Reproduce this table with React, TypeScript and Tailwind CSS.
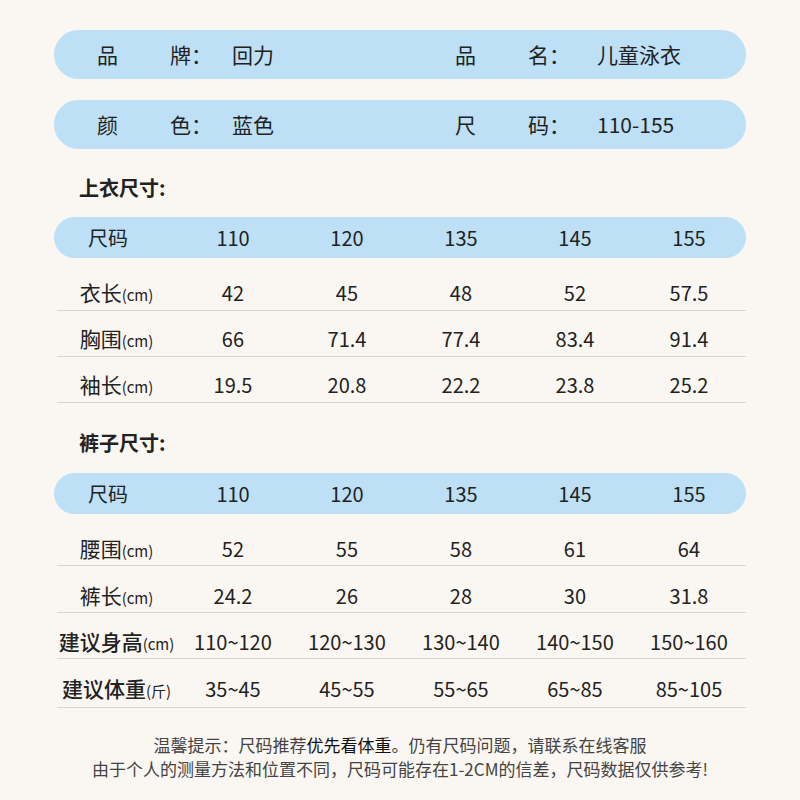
import React from "react";

const font = { fontFamily: '"Noto Sans CJK SC", "Noto Sans", sans-serif' };

const cols = ["110", "120", "135", "145", "155"];

function InfoPill({ a, b }: { a: [string, string, string]; b: [string, string, string] }) {
  const half = (x: [string, string, string], w: string, ml: string) => (
    <div className={`flex shrink-0 items-center ${w}`}>
      <div className="flex w-[115px] justify-between">
        <span>{x[0]}</span>
        <span>{x[1]}：</span>
      </div>
      <span className={ml}>{x[2]}</span>
    </div>
  );
  return (
    <div className="flex h-[49px] items-center rounded-full bg-[#bde0f6] pl-[43px] text-[21px] text-[#222]">
      {half(a, "w-[358px]", "ml-[20px]")}
      {half(b, "", "ml-[27px]")}
    </div>
  );
}

function Header() {
  return (
    <div className="flex h-[41px] items-center rounded-full bg-[#bde0f6] text-[20px] text-[#222]">
      <div className="w-[123px] pr-[14px] text-center">尺码</div>
      {cols.map((c) => (
        <div key={c} className="w-[115px] text-center">
          {c}
        </div>
      ))}
    </div>
  );
}

function Row({
  label,
  unit,
  vals,
  h,
  pt,
  bold,
}: {
  label: string;
  unit: string;
  vals: string[];
  h: string;
  pt: string;
  bold?: boolean;
}) {
  return (
    <div className={`ml-[3px] flex items-center border-b border-[#d9d4ce] text-[20px] text-[#222] ${h} ${pt}`}>
      <div className="flex w-[120px] items-baseline justify-center whitespace-nowrap">
        <span className={bold ? "font-medium text-[21px]" : "text-[21px]"}>{label}</span>
        <span className="text-[15px]">{unit}</span>
      </div>
      {vals.map((v, i) => (
        <div key={i} className="w-[115px] text-center">
          {v}
        </div>
      ))}
    </div>
  );
}

export default function App() {
  return (
    <div className="min-h-[800px] w-[800px] bg-[#faf6f1]" style={font}>
      <div className="mx-auto w-[692px] pt-[30px]">
        <InfoPill a={["品", "牌", "回力"]} b={["品", "名", "儿童泳衣"]} />
        <div className="h-[21px]" />
        <InfoPill a={["颜", "色", "蓝色"]} b={["尺", "码", "110-155"]} />

        <div className="mt-[25px] pl-[25px] text-[20px] font-bold leading-[28px] text-[#222]">上衣尺寸:</div>
        <div className="mt-[15px]">
          <Header />
        </div>
        <div className="mt-[7px]">
          <Row label="衣长" unit="(cm)" vals={["42", "45", "48", "52", "57.5"]} h="h-[46px]" pt="pt-[10px]" />
          <Row label="胸围" unit="(cm)" vals={["66", "71.4", "77.4", "83.4", "91.4"]} h="h-[46px]" pt="pt-[10px]" />
          <Row label="袖长" unit="(cm)" vals={["19.5", "20.8", "22.2", "23.8", "25.2"]} h="h-[46px]" pt="pt-[10px]" />
        </div>

        <div className="mt-[26px] pl-[25px] text-[20px] font-bold leading-[28px] text-[#222]">裤子尺寸:</div>
        <div className="mt-[16px]">
          <Header />
        </div>
        <div className="mt-[7px]">
          <Row label="腰围" unit="(cm)" vals={["52", "55", "58", "61", "64"]} h="h-[45px]" pt="pt-[11px]" />
          <Row label="裤长" unit="(cm)" vals={["24.2", "26", "28", "30", "31.8"]} h="h-[47px]" pt="pt-[13px]" />
          <Row
            label="建议身高"
            unit="(cm)"
            vals={["110~120", "120~130", "130~140", "140~150", "150~160"]}
            h="h-[46px]"
            pt="pt-[12px]"
            bold
          />
          <Row
            label="建议体重"
            unit="(斤)"
            vals={["35~45", "45~55", "55~65", "65~85", "85~105"]}
            h="h-[49px]"
            pt="pt-[11px]"
            bold
          />
        </div>

        <div className="mt-[25px] text-center text-[17px] leading-[24px] text-[#444]">
          <div>
            温馨提示：尺码推荐<span className="text-[#111]">优先看体重</span>。仍有尺码问题，请联系在线客服
          </div>
          <div>由于个人的测量方法和位置不同，尺码可能存在1-2CM的信差，尺码数据仅供参考!</div>
        </div>
      </div>
    </div>
  );
}
